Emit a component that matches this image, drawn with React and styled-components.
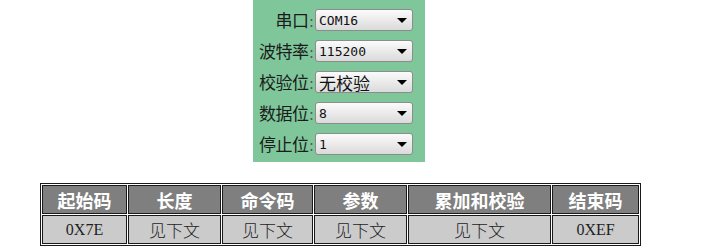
import React from "react";
import styled, { createGlobalStyle } from "styled-components";

const Global = createGlobalStyle`
  html, body { margin: 0; padding: 0; background: #ffffff; }
  body { font-family: "Noto Sans CJK SC", "Noto Sans", sans-serif; }
`;

const Page = styled.div`
  width: 718px;
  height: 252px;
  display: flex;
  flex-direction: column;
  align-items: flex-start;
`;

const Panel = styled.div`
  margin-left: 253px;
  width: 172px;
  height: 162px;
  box-sizing: border-box;
  background: #7fc79a;
  padding: 9px 12px 0 0;
  display: grid;
  grid-template-columns: 1fr 98px;
  grid-auto-rows: 22px;
  row-gap: 9px;
  column-gap: 2px;
  align-items: center;
`;

const Label = styled.div`
  text-align: right;
  font-family: "Noto Sans CJK SC", sans-serif;
  font-size: 17px;
  line-height: 22px;
  color: #1b1b1b;
  white-space: nowrap;
  letter-spacing: -0.5px;
`;

const Colon = styled.span`
  color: #555;
  font-size: 14px;
  margin-left: 1px;
`;

const Select = styled.div`
  height: 22px;
  box-sizing: border-box;
  border: 1px solid #8c8c8c;
  border-radius: 3px;
  background: linear-gradient(#fbfbfb, #e9e9e9 55%, #dadada);
  display: flex;
  align-items: center;
  justify-content: space-between;
  padding: 0 5px 0 3px;
  color: #111;
  font-family: ${(p) => (p.$cjk ? '"Noto Sans CJK SC", sans-serif' : '"DejaVu Sans Mono", monospace')};
  font-size: ${(p) => (p.$cjk ? "17px" : "13px")};
`;

const Arrow = styled.span`
  width: 0;
  height: 0;
  border-left: 5px solid transparent;
  border-right: 5px solid transparent;
  border-top: 5px solid #000;
  margin-top: 1px;
`;

const Table = styled.table`
  margin: 21px 0 0 40px;
  border: 1px solid #1a1a1a;
  border-collapse: separate;
  border-spacing: 1px;
  width: 601px;
  table-layout: fixed;
`;

const Cell = styled.td`
  box-sizing: border-box;
  border: 1px solid #1a1a1a;
  height: 29px;
  padding: 0;
  text-align: center;
  vertical-align: middle;
  background: ${(p) => (p.$head ? "#7f7f7f" : "#cbcbcb")};
  color: ${(p) => (p.$head ? "#ffffff" : "#1e1e1e")};
  font-family: "Liberation Serif", "Noto Sans CJK SC", serif;
  font-size: ${(p) => (p.$head ? "18px" : "17px")};
  font-weight: ${(p) => (p.$head ? 700 : 300)};
`;

const Latin = styled.span`
  font-size: 16px;
  font-weight: 400;
`;

const fields = [
  ["串口", "COM16"],
  ["波特率", "115200"],
  ["校验位", "无校验", true],
  ["数据位", "8"],
  ["停止位", "1"],
];

const cols = [
  ["起始码", "0X7E", 85, true],
  ["长度", "见下文", 93],
  ["命令码", "见下文", 91],
  ["参数", "见下文", 93],
  ["累加和校验", "见下文", 143],
  ["结束码", "0XEF", 87, true],
];

export default function App() {
  return (
    <Page>
      <Global />
      <Panel>
        {fields.map(([l, v, cjk]) => (
          <React.Fragment key={l}>
            <Label>
              {l}
              <Colon>:</Colon>
            </Label>
            <Select $cjk={cjk}>
              <span>{v}</span>
              <Arrow />
            </Select>
          </React.Fragment>
        ))}
      </Panel>
      <Table>
        <colgroup>
          {cols.map(([h, , w]) => (
            <col key={h} style={{ width: w }} />
          ))}
        </colgroup>
        <tbody>
          <tr>
            {cols.map(([h]) => (
              <Cell $head key={h}>{h}</Cell>
            ))}
          </tr>
          <tr>
            {cols.map(([h, v, , lat]) => (
              <Cell key={h}>{lat ? <Latin>{v}</Latin> : v}</Cell>
            ))}
          </tr>
        </tbody>
      </Table>
    </Page>
  );
}
